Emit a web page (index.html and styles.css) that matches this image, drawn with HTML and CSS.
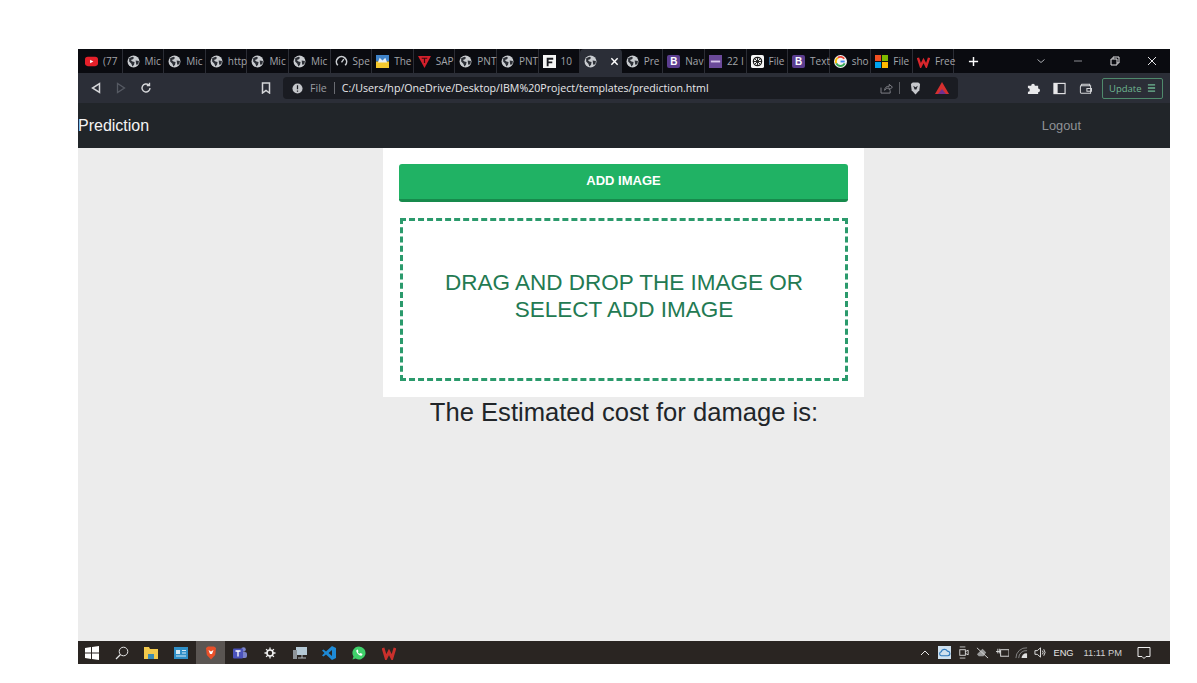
FILE: index.html
```html
<!DOCTYPE html>
<html lang="en">
<head>
  <meta charset="UTF-8">
  <title>Prediction</title>
  <link rel="stylesheet" href="styles.css">
</head>
<body>
  <svg class="defs" width="0" height="0">
    <symbol id="globe" viewBox="0 0 12 12">
      <circle cx="6" cy="6" r="5.500" fill="#c9ccd0"/>
      <path d="M2 3l3-1.500 1.500 1-1 1.500-2 .5 1.500 1.500 2 .5-.5 2.500-1.500 1.500-1-2.500-2-2zM8 5l3 .5-.5 3-2 .5z" fill="#2c2f36"/>
    </symbol>
  </svg>

  <div class="screen">
    <!-- browser tabs -->
    <div class="tabbar">
      <div class="tabs">
        <div class="tab"><svg class="fav" viewBox="0 0 14 14"><rect y="2" width="14" height="10" rx="3" fill="#e5202a"/><path d="M5.500 5v4l3.500-2z" fill="#fff"/></svg><span>(77</span></div>
        <div class="tab"><svg class="fav"><use href="#globe"/></svg><span>Mic</span></div>
        <div class="tab"><svg class="fav"><use href="#globe"/></svg><span>Mic</span></div>
        <div class="tab"><svg class="fav"><use href="#globe"/></svg><span>http</span></div>
        <div class="tab"><svg class="fav"><use href="#globe"/></svg><span>Mic</span></div>
        <div class="tab"><svg class="fav"><use href="#globe"/></svg><span>Mic</span></div>
        <div class="tab"><svg class="fav" viewBox="0 0 14 14"><path d="M3 11a5.500 5.500 0 1 1 8 0" fill="none" stroke="#c9ccd0" stroke-width="1.800"/><path d="M7 8l2.500-3.500" stroke="#c9ccd0" stroke-width="1.500"/></svg><span>Spe</span></div>
        <div class="tab"><svg class="fav" viewBox="0 0 14 14"><rect width="14" height="7" fill="#3f83c9"/><rect y="7" width="14" height="7" fill="#f5c92e"/><path d="M2 8l2-5 3 3 3-3 2 5z" fill="#e9eef2"/></svg><span>The</span></div>
        <div class="tab"><svg class="fav" viewBox="0 0 14 14"><path d="M0 1h14l-7 13z" fill="#d4202c"/><path d="M4 3.500h6M7 3.500v5" stroke="#3a0a0e" stroke-width="1.300"/></svg><span>SAP</span></div>
        <div class="tab"><svg class="fav"><use href="#globe"/></svg><span>PNT</span></div>
        <div class="tab"><svg class="fav"><use href="#globe"/></svg><span>PNT</span></div>
        <div class="tab"><svg class="fav" viewBox="0 0 14 14"><rect width="14" height="14" fill="#f4f4f4"/><path d="M4 3h7v2H6v2h4v2H6v3H4z" fill="#17181d"/></svg><span>10</span></div>
        <div class="tab tab-active"><svg class="fav"><use href="#globe"/></svg><svg class="close" viewBox="0 0 10 10"><path d="M1.500 1.500l7 7M8.500 1.500l-7 7" stroke="#fff" stroke-width="1.600"/></svg></div>
        <div class="tab"><svg class="fav"><use href="#globe"/></svg><span>Pre</span></div>
        <div class="tab"><b class="boot">B</b><span>Nav</span></div>
        <div class="tab"><svg class="fav" viewBox="0 0 14 14"><rect width="14" height="14" fill="#6b4a9a"/><rect x="2" y="6" width="10" height="2" fill="#d9c9ec"/></svg><span>22 I</span></div>
        <div class="tab"><svg class="fav" viewBox="0 0 14 14"><rect width="14" height="14" rx="2" fill="#f6f6f6"/><circle cx="7" cy="7" r="4.500" fill="none" stroke="#1a1a1a" stroke-width="1.300"/><path d="M7 2.500v9M2.500 7h9M4 4l6 6M10 4l-6 6" stroke="#1a1a1a"/></svg><span>File</span></div>
        <div class="tab"><b class="boot">B</b><span>Text</span></div>
        <div class="tab"><svg class="fav" viewBox="0 0 14 14"><circle cx="7" cy="7" r="7" fill="#f4f4f4"/><path d="M11.500 7H7" stroke="#4285f4" stroke-width="2"/><path d="M11 4a5 5 0 0 0-7-1" fill="none" stroke="#ea4335" stroke-width="2"/><path d="M4 3a5 5 0 0 0-1.500 6" fill="none" stroke="#fbbc05" stroke-width="2"/><path d="M2.500 9a5 5 0 0 0 9 0" fill="none" stroke="#34a853" stroke-width="2"/></svg><span>sho</span></div>
        <div class="tab"><svg class="fav" viewBox="0 0 14 14"><rect width="6.500" height="6.500" fill="#f25022"/><rect x="7.500" width="6.500" height="6.500" fill="#7fba00"/><rect y="7.500" width="6.500" height="6.500" fill="#00a4ef"/><rect x="7.500" y="7.500" width="6.500" height="6.500" fill="#ffb900"/></svg><span>File</span></div>
        <div class="tab"><svg class="fav" viewBox="0 0 14 14"><path d="M1 3l3 9 3-6 3 6 3-9" fill="none" stroke="#d8262c" stroke-width="2.600"/></svg><span>Free</span></div>
      </div>
      <svg class="new-tab" viewBox="0 0 12 12"><path d="M6 1v10M1 6h10" stroke="#fff" stroke-width="1.600"/></svg>
      <div class="win-btns">
        <svg viewBox="0 0 10 10"><path d="M1.500 3.500L5 6.500l3.500-3" fill="none" stroke="#a9abb0"/></svg>
        <svg viewBox="0 0 10 10"><path d="M1 5h8" stroke="#8b8d92"/></svg>
        <svg viewBox="0 0 10 10"><path d="M1 3h6v6H1zM3 3V1h6v6H7" fill="none" stroke="#e4e4e6"/></svg>
        <svg viewBox="0 0 10 10"><path d="M1 1l8 8M9 1l-8 8" stroke="#e4e4e6"/></svg>
      </div>
    </div>

    <!-- address bar -->
    <div class="toolbar">
      <div class="nav-btns">
        <svg viewBox="0 0 12 12"><path d="M9.500 1.500v9L2.500 6z" fill="none" stroke="#d5d6d9" stroke-width="1.500"/></svg>
        <svg viewBox="0 0 12 12"><path d="M2.500 1.500v9l7-4.500z" fill="none" stroke="#565a63" stroke-width="1.300"/></svg>
        <svg viewBox="0 0 12 12"><path d="M10 6a4 4 0 1 1-1.300-3M9.500 .8v2.700H6.800" fill="none" stroke="#d5d6d9" stroke-width="1.400"/></svg>
      </div>
      <svg class="bookmark" viewBox="0 0 10 12"><path d="M1.500 1h7v10L5 8.500 1.500 11z" fill="none" stroke="#d5d6d9" stroke-width="1.500"/></svg>
      <div class="omnibox">
        <svg class="info" viewBox="0 0 12 12"><circle cx="6" cy="6" r="5.500" fill="#c4c6ca"/><path d="M6 2.500v4.300M6 8.200v1.300" stroke="#1c1e24" stroke-width="1.400"/></svg>
        <span class="scheme">File</span>
        <span class="url">C:/Users/hp/OneDrive/Desktop/IBM%20Project/templates/prediction.html</span>
        <svg class="share" viewBox="0 0 14 12"><path d="M1 5v6h10V8M5 8c0-3 2-4.500 5-4.500V1.500l3.500 3-3.500 3V5.500C8 5.500 6 6 5 8z" fill="none" stroke="#85878d"/></svg>
        <i class="omni-sep"></i>
        <svg class="brave" viewBox="0 0 12 14"><path d="M1 2l2-1.500h6L11 2l-.8 7L6 13.500 1.800 9z" fill="#c5c7cb"/><path d="M3.500 4L6 5.500 8.500 4 7 8H5z" fill="#24262c"/></svg>
        <svg class="triangle" viewBox="0 0 14 12"><path d="M7 0l7 12H0z" fill="#d6302f"/><path d="M3 12l4-5 4 5z" fill="#70308f"/></svg>
      </div>
      <svg class="tool-icon puzzle" viewBox="0 0 14 14"><path d="M1 4h3.500a2 2 0 1 1 4 0H12v3a2 2 0 1 1 0 4v2H1v-2.500a2 2 0 1 0 0-4z" fill="#e8e8ea"/></svg>
      <svg class="tool-icon" viewBox="0 0 14 14"><rect x="1" y="1.500" width="12" height="11" fill="none" stroke="#e8e8ea" stroke-width="1.200"/><rect x="1" y="1.500" width="4" height="11" fill="#e8e8ea"/></svg>
      <svg class="tool-icon" viewBox="0 0 14 14"><path d="M12.500 4H2.500a1 1 0 0 0-1 1v6a1 1 0 0 0 1 1h10zM2 4l1-1.500h8.500V4M8.500 7h5v3h-5z" fill="none" stroke="#d5d6d9" stroke-width="1.100"/></svg>
      <div class="update">
        <span>Update</span>
        <svg viewBox="0 0 10 10"><path d="M1 1.500h8M1 5h8M1 8.500h8" stroke="#6fb792" stroke-width="1.500"/></svg>
      </div>
    </div>

    <!-- the page itself -->
    <nav class="navbar">
      <a class="brand">Prediction</a>
      <a class="logout">Logout</a>
    </nav>

    <main class="content">
      <div class="card">
        <button class="add-btn">ADD IMAGE</button>
        <div class="dropzone">DRAG AND DROP THE IMAGE OR<br>SELECT ADD IMAGE</div>
      </div>
      <h3 class="cost">The Estimated cost for damage is:</h3>
    </main>

    <!-- windows taskbar -->
    <div class="taskbar">
      <div class="task-apps">
        <div class="app"><svg viewBox="0 0 14 14"><path d="M0 2l6-1v5.500H0zM7 1l7-1v6.500H7zM0 7.500h6V13l-6-1zM7 7.500h7V14l-7-1z" fill="#fff"/></svg></div>
        <div class="app"><svg viewBox="0 0 14 14"><circle cx="8.500" cy="5.500" r="4.300" fill="none" stroke="#e6e6e6"/><path d="M5.500 8.500L1 13" stroke="#e6e6e6" stroke-width="1.200"/></svg></div>
        <div class="app"><svg viewBox="0 0 14 14"><path d="M0 1h5l1 2h8v10H0z" fill="#f2c94c"/><rect x="4" y="8" width="6" height="5" fill="#3a8bb5"/></svg></div>
        <div class="app"><svg viewBox="0 0 14 14"><rect y="1" width="14" height="12" fill="#2f8fc7"/><rect x="2" y="4" width="4" height="4" fill="#d7eaf5"/><path d="M8 4.500h4M8 7h4M2 10h10" stroke="#d7eaf5"/></svg></div>
        <div class="app app-on"><svg viewBox="0 0 12 14"><path d="M1 2l2-1.500h6L11 2l-.8 7L6 13.500 1.800 9z" fill="#e8502a"/><path d="M3.500 4L6 5.500 8.500 4 7 8H5z" fill="#fff"/></svg></div>
        <div class="app"><svg viewBox="0 0 14 14"><circle cx="10.500" cy="3.500" r="2.300" fill="#7b83c9"/><rect x="8" y="6" width="6" height="6" rx="2" fill="#7b83c9"/><rect y="2.500" width="10" height="10" rx="1" fill="#4b53bc"/><path d="M2.500 5h5M5 5v5.500" stroke="#fff" stroke-width="1.300"/></svg></div>
        <div class="app"><svg viewBox="0 0 14 14"><circle cx="7" cy="7" r="3" fill="none" stroke="#f2f2f2" stroke-width="1.600"/><path d="M7 1.500v2.500M7 10v2.500M1.500 7H4M10 7h2.500M3.100 3.100l1.800 1.800M9.100 9.100l1.800 1.800M10.900 3.100L9.100 4.900M4.900 9.100l-1.800 1.800" stroke="#f2f2f2" stroke-width="1.300"/></svg></div>
        <div class="app"><svg viewBox="0 0 14 14"><rect x="3" y="1" width="11" height="8" fill="#b5c9d6"/><rect x="0" y="4" width="4" height="9" fill="#8e9499"/><path d="M5 12h8M9 9v3" stroke="#b5bcc1"/></svg></div>
        <div class="app"><svg viewBox="0 0 14 14"><path d="M10 0l4 2v10l-4 2-6-5.500L1.500 10.500 0 9.500 2.500 7 0 4.500l1.500-1L4 5.500zM10 4L6.500 7l3.500 3z" fill="#1e8ad6"/></svg></div>
        <div class="app"><svg viewBox="0 0 14 14"><path d="M7 .5a6.500 6.500 0 0 0-5.500 10L.5 13.500l3.200-.9A6.500 6.500 0 1 0 7 .5z" fill="#3fd06a"/><path d="M4.500 4c-1 2 2.500 6.500 5.500 5.500l.5-1.500-2-1-.8.8C6.700 7.500 6 6.800 5.800 6l.7-.8-.8-1.700z" fill="#fff"/></svg></div>
        <div class="app"><svg viewBox="0 0 14 14"><path d="M1 2l3 10 3-6 3 6 3-10" fill="none" stroke="#c9302c" stroke-width="2.800"/></svg></div>
      </div>
      <div class="tray">
        <svg class="chev" viewBox="0 0 10 6"><path d="M1 5l4-4 4 4" fill="none" stroke="#e6e6e6"/></svg>
        <svg class="cloud" viewBox="0 0 14 14"><rect width="14" height="14" fill="#cfe0ee"/><path d="M3.500 10.500a2.200 2.200 0 0 1 0-4.300 3.500 3.500 0 0 1 6.500-.7 2.500 2.500 0 0 1 .5 5z" fill="none" stroke="#2d79bd" stroke-width="1.200"/></svg>
        <svg viewBox="0 0 14 14"><path d="M3 1h6M3 13h6" stroke="#c9c9c9"/><rect x="3" y="4" width="6" height="6" fill="none" stroke="#d9d9d9"/><path d="M9 6l3-1.500v5L9 8" fill="none" stroke="#d9d9d9"/></svg>
        <svg viewBox="0 0 14 14"><path d="M1 9l6-6 4 4-3 4H3z" fill="#9a9a9a"/><path d="M1 2l12 11" stroke="#d9d9d9"/></svg>
        <svg viewBox="0 0 14 14"><rect x="5" y="4" width="9" height="7" fill="none" stroke="#e0e0e0"/><path d="M0 6h5M2 3v5M4 3v5" stroke="#e0e0e0"/></svg>
        <svg viewBox="0 0 14 14"><path d="M1 13a11 11 0 0 1 12-11M4 13a8 8 0 0 1 9-8" fill="none" stroke="#8a8a8a"/><path d="M7 13a5 5 0 0 1 6-5v5z" fill="#e0e0e0"/></svg>
        <svg viewBox="0 0 14 14"><path d="M1 5h2.500L7 2v10L3.500 9H1z" fill="none" stroke="#e6e6e6"/><path d="M9 5a3 3 0 0 1 0 4M10.500 3.500a5.500 5.500 0 0 1 0 7" fill="none" stroke="#e6e6e6"/></svg>
        <span class="lang">ENG</span>
        <span class="clock">11:11 PM</span>
        <svg class="notif" viewBox="0 0 14 14"><path d="M1 1.500h12v9H9L7 12.500 5 10.500H1z" fill="none" stroke="#efefef"/></svg>
      </div>
    </div>
  </div>
</body>
</html>
```

FILE: styles.css
```css
* {
  box-sizing: border-box;
}
body {
  margin: 0;
  background: white;
  font-family: "Liberation Sans", Arial, sans-serif;
}
.defs {
  display: block;
  height: 0;
}
.screen {
  width: 1092px;
  height: 615px;
  margin: 49px 0 0 78px;
  display: flex;
  flex-direction: column;
  background: #ececec;
}

/* tabs */
.tabbar {
  height: 24px;
  flex: none;
  display: flex;
  align-items: center;
  padding-left: 3px;
  background: #0a0b10;
}
.tabs {
  display: flex;
  height: 24px;
}
.tab {
  width: 41.600px;
  display: flex;
  align-items: center;
  gap: 5px;
  padding-left: 4px;
  border-right: 1px solid #2b2d35;
  font-family: "Open Sans", sans-serif;
  font-size: 10px;
  color: #a3a5aa;
  white-space: nowrap;
}
.tab-active {
  background: #2b2e37;
  border-right: none;
  border-radius: 4px 4px 0 0;
  gap: 13px;
}
.fav {
  width: 13px;
  height: 13px;
  flex: none;
}
.boot {
  width: 13px;
  height: 13px;
  flex: none;
  border-radius: 2px;
  background: #5b3d8f;
  color: white;
  font-family: "Liberation Sans", sans-serif;
  font-size: 10px;
  line-height: 13px;
  text-align: center;
}
.close {
  width: 9px;
  height: 9px;
  flex: none;
}
.new-tab {
  width: 11px;
  height: 11px;
  margin-left: 14px;
}
.win-btns {
  display: flex;
  margin-left: 57px;
  gap: 27px;
}
.win-btns svg {
  width: 10px;
  height: 10px;
}

/* address bar */
.toolbar {
  height: 30px;
  flex: none;
  display: flex;
  align-items: center;
  padding-left: 12px;
  background: #2b2e37;
}
.nav-btns {
  display: flex;
  gap: 13px;
}
.nav-btns svg {
  width: 12px;
  height: 12px;
}
.bookmark {
  width: 10px;
  height: 12px;
  margin-left: 109px;
}
.omnibox {
  width: 675px;
  height: 22px;
  margin-left: 12px;
  display: flex;
  align-items: center;
  padding-left: 9px;
  border-radius: 4px;
  background: #1a1c22;
  font-family: "Open Sans", sans-serif;
  font-size: 10.650px;
  white-space: nowrap;
}
.info {
  width: 11px;
  height: 11px;
}
.scheme {
  margin-left: 7px;
  padding-right: 7px;
  border-right: 1px solid #6a6c72;
  line-height: 12px;
  color: #9a9ca1;
}
.url {
  width: 514px;
  margin-left: 7px;
  color: #e9e9eb;
}
.share {
  width: 13px;
  height: 11px;
  margin-left: 24px;
}
.omni-sep {
  width: 1px;
  height: 12px;
  margin-left: 6px;
  background: #5b5d63;
}
.brave {
  width: 11px;
  height: 13px;
  margin-left: 10px;
}
.triangle {
  width: 14px;
  height: 12px;
  margin-left: 14px;
}
.tool-icon {
  width: 13px;
  height: 13px;
  margin-left: 13px;
}
.puzzle {
  margin-left: 69px;
}
.update {
  width: 61px;
  height: 21px;
  margin-left: 10px;
  display: flex;
  align-items: center;
  justify-content: space-between;
  padding: 0 6px;
  border: 1px solid #4f8a6c;
  border-radius: 2px;
  font-family: "Open Sans", sans-serif;
  font-size: 9.500px;
  color: #6fb792;
}
.update svg {
  width: 9px;
  height: 10px;
}

/* page navbar */
.navbar {
  height: 45px;
  flex: none;
  display: flex;
  align-items: center;
  justify-content: space-between;
  padding-right: 89px;
  background: #212529;
}
.brand {
  font-size: 16px;
  color: #f4f4f4;
}
.logout {
  font-size: 12.800px;
  color: #8f9296;
}

.content {
  flex: 1;
  display: flex;
  flex-direction: column;
  align-items: center;
}
.card {
  width: 481px;
  height: 249px;
  margin-left: -1px;
  padding: 16px 16px 0;
  background: white;
}
.add-btn {
  display: block;
  width: 449px;
  height: 38px;
  padding: 0 0 2px;
  border: none;
  border-bottom: 3px solid #178a4c;
  border-radius: 3px;
  background: #20b264;
  color: white;
  font-family: inherit;
  font-size: 13px;
  font-weight: bold;
}
.dropzone {
  width: 448px;
  height: 163px;
  margin: 16px 0 0 1px;
  display: flex;
  align-items: center;
  justify-content: center;
  padding-bottom: 8px;
  text-align: center;
  border: 3px dashed #2b9a6c;
  font-size: 22.500px;
  line-height: 27px;
  color: #237a52;
}
.cost {
  margin: 0;
  font-size: 25.600px;
  font-weight: normal;
  line-height: 30px;
  color: #212529;
}

/* taskbar */
.taskbar {
  height: 23px;
  flex: none;
  display: flex;
  align-items: center;
  justify-content: space-between;
  background: #2a2522;
}
.task-apps {
  display: flex;
  height: 23px;
  margin-left: -1px;
}
.app {
  width: 29.700px;
  display: flex;
  align-items: center;
  justify-content: center;
}
.app svg {
  width: 14px;
  height: 14px;
}
.app-on {
  background: #5a5552;
}
.tray {
  display: flex;
  align-items: center;
  gap: 6.300px;
  padding-right: 19px;
  font-size: 9.300px;
  color: #e6e6e6;
}
.tray svg {
  width: 13px;
  height: 13px;
}
.tray .chev {
  width: 10px;
  height: 6px;
  margin-right: 1px;
}
.clock {
  margin-left: 3.700px;
  color: #d0d0d0;
}
.tray .notif {
  width: 14px;
  height: 14px;
  margin-left: 8.700px;
}
```
